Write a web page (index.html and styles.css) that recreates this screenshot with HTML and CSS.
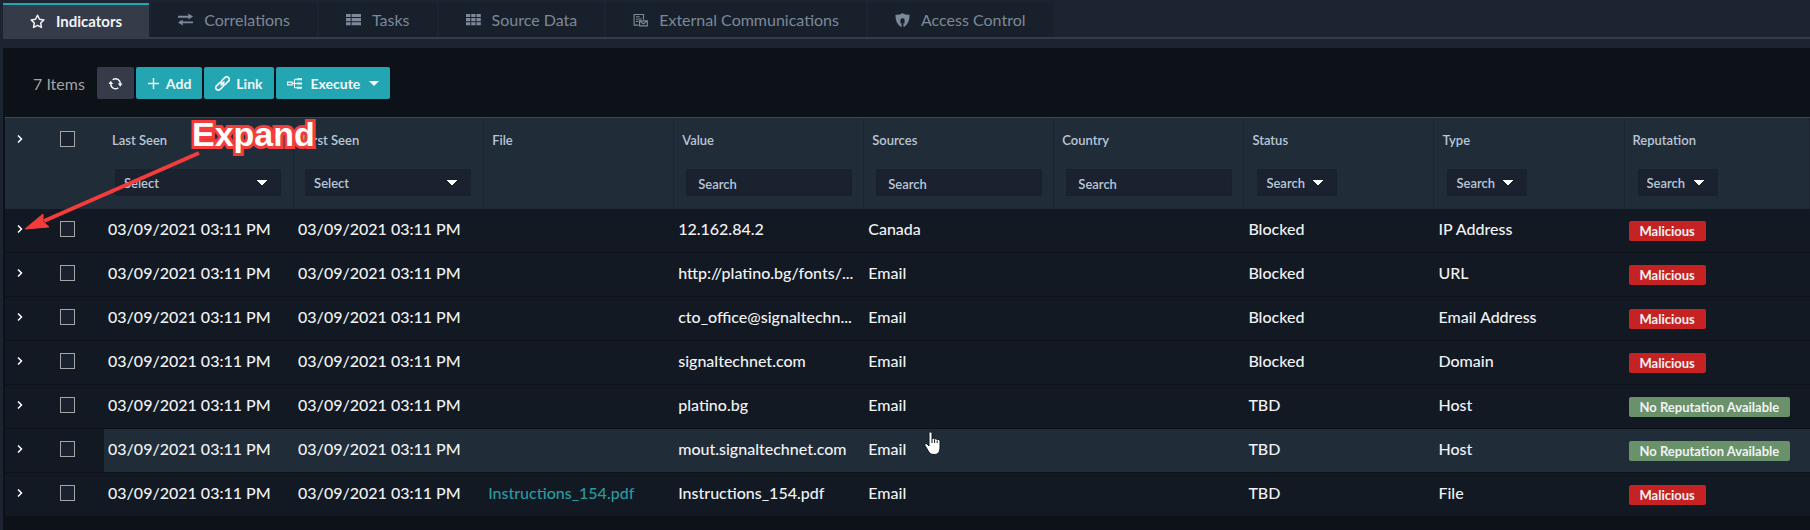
FILE: index.html
```
<!DOCTYPE html>
<html lang="en">
<head>
<meta charset="utf-8">
<title>Indicators</title>
<link rel="stylesheet" href="styles.css">
</head>
<body>
<nav class="tabs" aria-label="Record sections">
  <a class="tab tab-active" href="#indicators"><svg class="icon" viewBox="0 0 16 16" fill="none" stroke="currentColor" stroke-width="1.6" stroke-linejoin="round"><path d="M8 1.300l2.100 4.300 4.700.7-3.400 3.300.8 4.700L8 12.100l-4.200 2.200.8-4.700L1.200 6.300l4.700-.7z"/></svg>Indicators</a>
  <a class="tab" href="#correlations"><svg class="icon" viewBox="0 0 16 16" fill="currentColor"><path d="M0 4h11V1.500l5 3.300-5 3.300V6H0zM16 10H5V7.900L0 11.200l5 3.300V12h11z"/></svg>Correlations</a>
  <a class="tab" href="#tasks"><svg class="icon" viewBox="0 0 16 16" fill="currentColor"><path d="M0 2h5v3.400H0zM6 2h10v3.400H6zM0 6.400h5v3.400H0zM6 6.400h10v3.400H6zM0 10.800h5v3.400H0zM6 10.800h10v3.400H6z"/></svg>Tasks</a>
  <a class="tab" href="#source"><svg class="icon" viewBox="0 0 16 16" fill="currentColor"><path d="M0 2h4.600v3.400H0zM5.600 2h4.600v3.400H5.600zM11.200 2h4.600v3.400h-4.600zM0 6.400h4.600v3.400H0zM5.600 6.400h4.600v3.400H5.600zM11.200 6.400h4.600v3.400h-4.600zM0 10.800h4.600v3.400H0zM5.600 10.800h4.600v3.400H5.600zM11.200 10.800h4.600v3.400h-4.600z"/></svg>Source Data</a>
  <a class="tab" href="#external"><svg class="icon" viewBox="0 0 16 16" fill="none" stroke="currentColor" stroke-width="1.200"><path d="M6 14H1.200V2.600h10V8M3.200 5h4M3.200 7.500h6M3.200 10h2.500"/><path d="M7 9.500h8.300v5.300H7zM7 9.500l4.100 3 4.200-3"/></svg>External Communications</a>
  <a class="tab" href="#access"><svg class="icon" viewBox="0 0 16 16" fill="currentColor" fill-rule="evenodd"><path d="M8 1c2 1.600 4.500 2 7.500 2 .2 5.500-1.700 10-5 12.500L9 16v-4h1.500L10 10a2.300 2.300 0 1 0-4 0l-.5 2H7v4l-1.500-.5C2.200 13 .3 8.500.5 3 3.500 3 6 2.600 8 1z"/></svg>Access Control</a>
</nav>

<main class="panel">
  <div class="toolbar">
    <span class="count">7 Items</span>
    <div class="actions">
      <button class="btn btn-dark" type="button" aria-label="Refresh"><svg class="icon" viewBox="0 0 16 16" fill="none" stroke="currentColor" stroke-width="1.500"><path d="M5 4a5 5 0 0 1 8 4.500M11 12.500A5 5 0 0 1 3 8"/><path fill="currentColor" stroke="none" d="M10.500 8h5L13 11.500zM.5 8.500h5L3 5z"/></svg></button>
      <button class="btn" type="button"><svg class="icon icon-add" viewBox="0 0 14 14" fill="none" stroke="currentColor" stroke-width="1.600"><path d="M7 1v12M1 7h12"/></svg>Add</button>
      <button class="btn" type="button"><svg class="icon" viewBox="0 0 16 16" fill="none" stroke="currentColor" stroke-width="1.800"><g transform="rotate(-45 8 8)"><rect x="-1" y="5.300" width="9.500" height="5.400" rx="2.700"/><rect x="7.500" y="5.300" width="9.500" height="5.400" rx="2.700"/><path d="M5 8h6"/></g></svg>Link</button>
      <button class="btn btn-execute" type="button"><svg class="icon" viewBox="0 0 16 16" fill="none" stroke="currentColor" stroke-width="1.200"><path d="M.6 6.500h5v3h-5zM5.600 8h10M8 3.500v9M8 3.500h7M8 12.500h7"/><path stroke-width="2.200" d="M10.500 3.500H16M10.500 8H16M10.500 12.500H16"/></svg>Execute<span class="caret"></span></button>
    </div>
  </div>

  <table class="grid">
    <colgroup><col class="c-expand"><col class="c-check"><col class="c-data" span="8"><col></colgroup>
    <thead>
      <tr>
        <th class="tight"><button class="expand" type="button" aria-label="Expand all"><svg viewBox="0 0 6 8"><path d="M1 .5L4.500 4 1 7.500"/></svg></button></th>
        <th class="tight"><input class="check" type="checkbox" aria-label="Select all"></th>
        <th><label for="f1">Last Seen</label><select class="filter wide" id="f1"><option>Select</option></select></th>
        <th><label for="f2">First Seen</label><select class="filter wide" id="f2"><option>Select</option></select></th>
        <th><span class="head">File</span></th>
        <th><label for="f3">Value</label><input class="filter text" id="f3" type="text" placeholder="Search"></th>
        <th><label for="f4">Sources</label><input class="filter text" id="f4" type="text" placeholder="Search"></th>
        <th><label for="f5">Country</label><input class="filter text" id="f5" type="text" placeholder="Search"></th>
        <th><label for="f6">Status</label><select class="filter small" id="f6"><option>Search</option></select></th>
        <th><label for="f7">Type</label><select class="filter small" id="f7"><option>Search</option></select></th>
        <th><label for="f8">Reputation</label><select class="filter small" id="f8"><option>Search</option></select></th>
      </tr>
    </thead>
    <tbody id="rows"></tbody>
  </table>
</main>

<svg class="arrow" viewBox="0 0 180 84" aria-hidden="true"><path d="M175 4L20 72" stroke="#f43c3c" stroke-width="4" fill="none"/><path d="M1 80L19 65V72.500L25 78z" fill="#f43c3c" stroke="#f43c3c"/></svg>
<div class="callout">Expand</div>
<svg class="pointer" viewBox="0 0 18 25" aria-hidden="true"><path d="M5 2.500C5 .6 8 .6 8 2.500V8c.3-1.200 2.400-1 2.600.3.500-1 2.300-.8 2.500.6.700-.9 2.900-.6 2.900 1.200V16c0 5-2 7.500-6 7.500-3.500 0-4.600-1.500-6-4L1 14.500c-.8-1.600 1.100-2.400 2.200-1.300L5 15z" fill="#fff" stroke="#111820"/><path d="M8 8v4M10.600 8.500V12M13.200 9.500V12" stroke="#111820" fill="none"/></svg>
<script src="app.js"></script>
</body>
</html>
```
FILE: styles.css
```
* { box-sizing: border-box; }
body {
  margin: 0;
  min-height: 100vh;
  padding: 3px 0 0 3px;
  display: flex;
  flex-direction: column;
  background: #1c2331;
  color: #f0f2f4;
  font-family: Lato, "Liberation Sans", sans-serif;
  font-size: 16px;
  overflow: hidden;
}
button, input, select { font: inherit; color: inherit; }
.icon { width: 15px; height: 15px; flex: none; }

.tabs {
  display: flex;
  gap: 2px;
  height: 36px;
  border-bottom: 2px solid #353b49;
  margin-bottom: 9px;
}
.tab {
  display: flex;
  align-items: center;
  gap: 11px;
  padding: 0 27px 2px;
  height: 34px;
  background: #18202b;
  color: #7d8898;
  text-decoration: none;
}
.tab-active {
  height: 36px;
  background: #353b49;
  border-top: 2px solid #23a6b1;
  color: #f0f2f4;
  font-size: 15px;
  font-weight: 700;
}

.panel { flex: 1; background: #0d1118; padding-left: 2px; }
.toolbar { display: flex; align-items: center; gap: 12px; padding: 19px 0 18px 28px; }
.count { color: #a3a3a3; }
.actions { display: flex; gap: 2px; }
.btn {
  display: flex;
  align-items: center;
  gap: 6px;
  height: 32px;
  padding: 0 11px;
  border: 0;
  border-radius: 2px;
  background: #23a6b1;
  color: #f0f8f9;
  font-size: 14px;
  font-weight: 700;
}
.btn-dark { background: #353b49; }
.btn-execute { gap: 9px; }
.icon-add { width: 13px; height: 13px; }
.caret { border: 5px solid transparent; border-top-color: #fff; border-bottom: 0; }

.grid { width: 100%; table-layout: fixed; border-collapse: separate; border-spacing: 0; border-top: 1px solid #3a4757; }
.c-expand { width: 31px; }
.c-check { width: 68px; }
.c-data { width: 10.53%; }
.grid th {
  height: 91px;
  padding: 14px 8px 12px;
  vertical-align: top;
  text-align: left;
  background: #212c39;
  border-right: 1px solid #1c2531;
  color: #b9c6d6;
  font-size: 13px;
  font-weight: 600;
}
.grid th label, .head { display: block; line-height: 16px; margin-bottom: 21px; }
.filter {
  display: block;
  height: 27px;
  margin-left: 3px;
  padding: 0 8px;
  border: 1px solid #18202b;
  border-radius: 2px;
  background: #1b222f;
  font-size: 13px;
}
select.filter {
  appearance: none;
  background-image: linear-gradient(to bottom left, #fff 50%, transparent 51%), linear-gradient(to bottom right, #fff 50%, transparent 51%);
  background-size: 5px 5px, 5px 5px;
  background-repeat: no-repeat;
  background-position: right 18px center, right 13px center;
}
.wide, .text { width: calc(100% - 7px); }
.text { margin-left: 4px; padding: 2px 11px 0; border-radius: 0; }
.text::placeholder { color: #b9c6d6; opacity: 1; }
.small { width: 80px; margin-left: 5px; }

.grid td {
  height: 44px;
  padding: 0 4px 4px;
  overflow: hidden;
  white-space: nowrap;
  background: #131922;
  border-bottom: 1px solid #0d1118;
  font-weight: 500;
}
.grid .tight { padding: 0 0 4px 12px; border-right: 0; }
.grid th.tight { padding-top: 13px; }
.grid .tight + .tight { padding-left: 24px; }
.grid .hovered td:not(.tight) { background: #212c39; }
.grid td a { color: #2a9a9f; text-decoration: none; }
.expand { display: flex; padding: 4px 0; border: 0; background: none; }
.expand svg { width: 6px; height: 8px; fill: none; stroke: #fff; stroke-width: 1.5; }
.check {
  appearance: none;
  display: block;
  width: 15px;
  height: 16px;
  margin: 0;
  border: 1px solid #a5a5a5;
  background: #1b222f;
}
.badge {
  display: inline-block;
  margin-top: 4px;
  padding: 0 11px;
  border-radius: 2px;
  background: #c52323;
  font-size: 13px;
  font-weight: 700;
  line-height: 20px;
  vertical-align: middle;
}
.badge-none { background: #69916a; }

.arrow { position: absolute; left: 24px; top: 149px; width: 180px; height: 84px; }
.callout {
  position: absolute;
  left: 192px;
  top: 115px;
  color: #fff;
  font: 700 34px/38px "Liberation Sans", sans-serif;
  -webkit-text-stroke: 6px #f43c3c;
  paint-order: stroke fill;
}
.pointer { position: absolute; left: 924px; top: 431px; width: 18px; height: 25px; }
```
FILE: app.js
```
const seen = "03/09/2021 03:11 PM";
const indicators = [
  ["", "12.162.84.2", "Canada", "Blocked", "IP Address", "Malicious"],
  ["", "http://platino.bg/fonts/...", "Email", "Blocked", "URL", "Malicious"],
  ["", "cto_office@signaltechn...", "Email", "Blocked", "Email Address", "Malicious"],
  ["", "signaltechnet.com", "Email", "Blocked", "Domain", "Malicious"],
  ["", "platino.bg", "Email", "TBD", "Host", "No Reputation Available"],
  ["", "mout.signaltechnet.com", "Email", "TBD", "Host", "No Reputation Available"],
  ["Instructions_154.pdf", "Instructions_154.pdf", "Email", "TBD", "File", "Malicious"],
];
document.getElementById("rows").innerHTML = indicators.map(([file, value, source, status, type, rep], i) => `
  <tr class="${i === 5 ? "hovered" : ""}">
    <td class="tight"><button class="expand" type="button" aria-label="Expand row"><svg viewBox="0 0 6 8"><path d="M1 .5L4.500 4 1 7.500"/></svg></button></td>
    <td class="tight"><input class="check" type="checkbox" aria-label="Select row"></td>
    <td>${seen}</td><td>${seen}</td>
    <td>${file ? `<a href="#file">${file}</a>` : ""}</td>
    <td>${value}</td><td>${source}</td><td></td><td>${status}</td><td>${type}</td>
    <td><span class="badge ${rep === "Malicious" ? "" : "badge-none"}">${rep}</span></td>
  </tr>`).join("");
```
